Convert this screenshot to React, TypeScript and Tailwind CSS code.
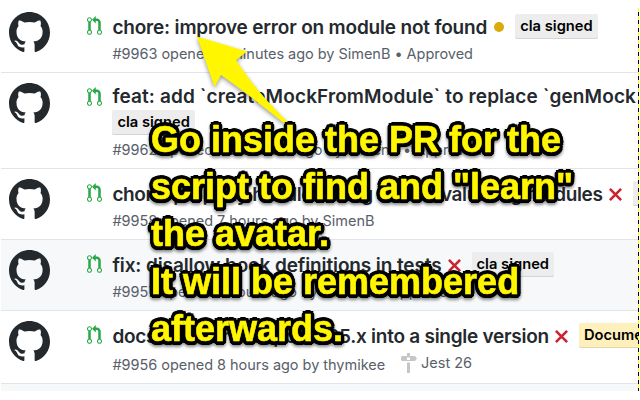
import React from "react";

const MARK = "M8 0C3.58 0 0 3.58 0 8c0 3.54 2.29 6.53 5.47 7.59.4.07.55-.17.55-.38 0-.19-.01-.82-.01-1.49-2.01.37-2.53-.49-2.69-.94-.09-.23-.48-.94-.82-1.13-.28-.15-.68-.52-.01-.53.63-.01 1.08.58 1.23.82.72 1.21 1.87.87 2.33.66.07-.52.28-.87.51-1.07-1.78-.2-3.64-.89-3.64-3.95 0-.87.31-1.59.82-2.15-.08-.2-.36-1.02.08-2.12 0 0 .67-.21 2.2.82.64-.18 1.32-.27 2-.27s1.36.09 2 .27c1.53-1.04 2.2-.82 2.2-.82.44 1.1.16 1.92.08 2.12.51.56.82 1.27.82 2.15 0 3.07-1.87 3.75-3.65 3.95.29.25.54.73.54 1.48 0 1.07-.01 1.93-.01 2.2 0 .21.15.46.55.38A8.01 8.01 0 0 0 16 8c0-4.42-3.58-8-8-8z";
const PR = "M11 11.28V5c-.03-.78-.34-1.47-.94-2.06C9.46 2.35 8.78 2.03 8 2H7V0L4 3l3 3V4h1c.27.02.48.11.69.31.21.2.3.42.31.69v6.28A1.993 1.993 0 0 0 10 15a1.993 1.993 0 0 0 1-3.72zm-1 2.92c-.66 0-1.2-.55-1.2-1.2 0-.65.55-1.2 1.2-1.2.65 0 1.2.55 1.2 1.2 0 .65-.55 1.2-1.2 1.2zM4 3c0-1.11-.89-2-2-2a1.993 1.993 0 0 0-1 3.72v6.56A1.993 1.993 0 0 0 2 15a1.993 1.993 0 0 0 1-3.72V4.72c.59-.34 1-.98 1-1.72zm-.8 10c0 .66-.55 1.2-1.2 1.2-.65 0-1.2-.55-1.2-1.2 0-.65.55-1.2 1.2-1.2.65 0 1.2.55 1.2 1.2zM2 4.2C1.34 4.2.8 3.65.8 3c0-.65.55-1.2 1.2-1.2.65 0 1.2.55 1.2 1.2 0 .65-.55 1.2-1.2 1.2z";

function Title({ children, className = "tracking-[-0.18px]" }: { children: React.ReactNode; className?: string }) {
  return <span className={"shrink-0 text-[19px] font-semibold leading-7 text-[#24292e] " + className}>{children}</span>;
}

function Cross() {
  return (
    <svg className="ml-1.5 h-[13px] w-[13px] shrink-0 self-start mt-[7px]" viewBox="0 0 13 13">
      <path d="M.9.9 12.1 12.1M12.1.9.9 12.1" stroke="#cb2431" strokeWidth="2.6" fill="none" />
    </svg>
  );
}

function Label({ children, color = "bg-[#ededed]" }: { children: React.ReactNode; color?: string }) {
  return (
    <span className={"flex h-[25px] shrink-0 items-center self-start rounded-[2px] px-[5px] pb-px text-[14.7px] font-semibold leading-none text-black shadow-[inset_0_-1px_0_rgba(27,31,35,0.12)] " + color}>
      {children}
    </span>
  );
}

function Row({ className, children }: { className: string; children: React.ReactNode }) {
  return (
    <div className={"flex shrink-0 border-b border-[#e1e4e8] " + className}>
      <svg className="ml-2 mt-[10px] h-[41px] w-[41px] shrink-0" viewBox="0 0 16 16">
        <path d={MARK} fill="#24292e" />
      </svg>
      <svg className="ml-[37px] mt-[14px] h-5 w-[15px] shrink-0" viewBox="0 0 12 16">
        <path d={PR} fill="#28a745" />
      </svg>
      <div className="ml-[10.4px] min-w-0 flex-1">{children}</div>
    </div>
  );
}

function Line({ children }: { children: React.ReactNode }) {
  return <div className="mt-3 flex h-7 items-center">{children}</div>;
}

function Meta({ children, className = "mt-0.5" }: { children: React.ReactNode; className?: string }) {
  return <div className={"flex h-5 items-center text-[14.5px] tracking-[-0.03px] text-[#586069] " + className}>{children}</div>;
}

export default function App() {
  return (
    <div className="relative h-[400px] w-[640px] overflow-hidden whitespace-nowrap bg-white font-['Inter','Liberation_Sans',sans-serif]">
      <div className="flex h-[391px] w-[639px] flex-col overflow-hidden pl-px pt-0.5">
        <Row className="h-[71px]">
          <Line>
            <Title>chore: improve error on module not found</Title>
            <span className="mb-0.5 ml-[7px] h-[10px] w-[10px] shrink-0 rounded-full bg-[#dbab09]" />
            <span className="w-[11px]" />
            <Label>cla signed</Label>
          </Line>
          <Meta>#9963 opened 8 minutes ago by SimenB • Approved</Meta>
        </Row>
        <Row className="h-24">
          <div className="mt-[10px] flex h-[27px]"><Title className="tracking-[0.12px]">feat: add `createMockFromModule` to replace `genMock</Title></div>
          <div className="flex"><Label>cla signed</Label></div>
          <Meta className="mt-[5px]">#9962 opened 23 minutes ago by SimenB • Approved</Meta>
        </Row>
        <Row className="h-[71px]">
          <Line>
            <Title className="tracking-[-0.39px]">chore: properly handle config when evaluating modules</Title>
            <Cross />
            <span className="w-[11px] shrink-0" />
            <Label>cla signed</Label>
          </Line>
          <Meta>#9958 opened 7 hours ago by SimenB</Meta>
        </Row>
        <Row className="h-[71px] bg-[#f6f8fa]">
          <Line>
            <Title className="tracking-[-0.11px]">fix: disallow hook definitions in tests</Title>
            <Cross />
            <span className="w-[11px] shrink-0" />
            <Label>cla signed</Label>
          </Line>
          <Meta>#9957 opened 7 hours ago by SimenB • Approved</Meta>
        </Row>
        <Row className="h-[73px]">
          <Line>
            <Title className="tracking-[-0.26px]">docs: combine all posts 25.x into a single version</Title>
            <Cross />
            <span className="w-[11px] shrink-0" />
            <Label color="bg-[#fef0bd]">Documentation</Label>
          </Line>
          <Meta className="mt-1">
            <span>#9956 opened 8 hours ago by thymikee</span>
            <svg className="-mt-1 ml-4 h-5 w-4 shrink-0" viewBox="0 0 16 20" fill="#c6c6c6">
              <path fillRule="evenodd" d="M6 0h3v3h5l2 2.500L14 8H1L0 7V4l1-1h5zM6 4.500V7h3V4.500zM6 9.500h3V20H6z" />
            </svg>
            <span className="mb-1 ml-1">Jest 26</span>
          </Meta>
        </Row>
        <div className="flex-1 bg-[#f6f8fa]" />
      </div>

      <div className="absolute left-[638px] top-2 h-[383px] w-px bg-[repeating-linear-gradient(to_bottom,#ffff00_0_4px,#000_4px_8px)]" />

      <svg className="absolute left-[190px] top-[30px] h-[100px] w-[110px] overflow-visible drop-shadow-[0_2px_2px_rgba(0,0,0,0.4)]" viewBox="190 30 110 100">
        <path d="M197 36.500 247 51.500 236 60Q257 93 289 123L284 123Q249 95 221 75L214.500 87Z" fill="#fff600" />
      </svg>

      <div className="absolute left-[151px] top-[115.5px] flex flex-col font-['Liberation_Sans',Arial,sans-serif] text-[36px] font-bold leading-[47.4px] text-[#fff600] [-webkit-text-stroke:0.6px_#fff600] [text-shadow:3.8px_0_#000,3.5px_1.5px_#000,2.7px_2.7px_#000,1.5px_3.5px_#000,0_3.8px_#000,-1.5px_3.5px_#000,-2.7px_2.7px_#000,-3.5px_1.5px_#000,-3.8px_0_#000,-3.5px_-1.5px_#000,-2.7px_-2.7px_#000,-1.5px_-3.5px_#000,0_-3.8px_#000,1.5px_-3.5px_#000,2.7px_-2.7px_#000,3.5px_-1.5px_#000,2px_0_#000,-2px_0_#000,0_2px_#000,0_-2px_#000] drop-shadow-[0_2px_1.5px_rgba(0,0,0,0.45)]">
        <span>Go inside the PR for the</span>
        <span>script to find and "learn"</span>
        <span>the avatar.</span>
        <span>It will be remembered</span>
        <span>afterwards.</span>
      </div>
    </div>
  );
}
